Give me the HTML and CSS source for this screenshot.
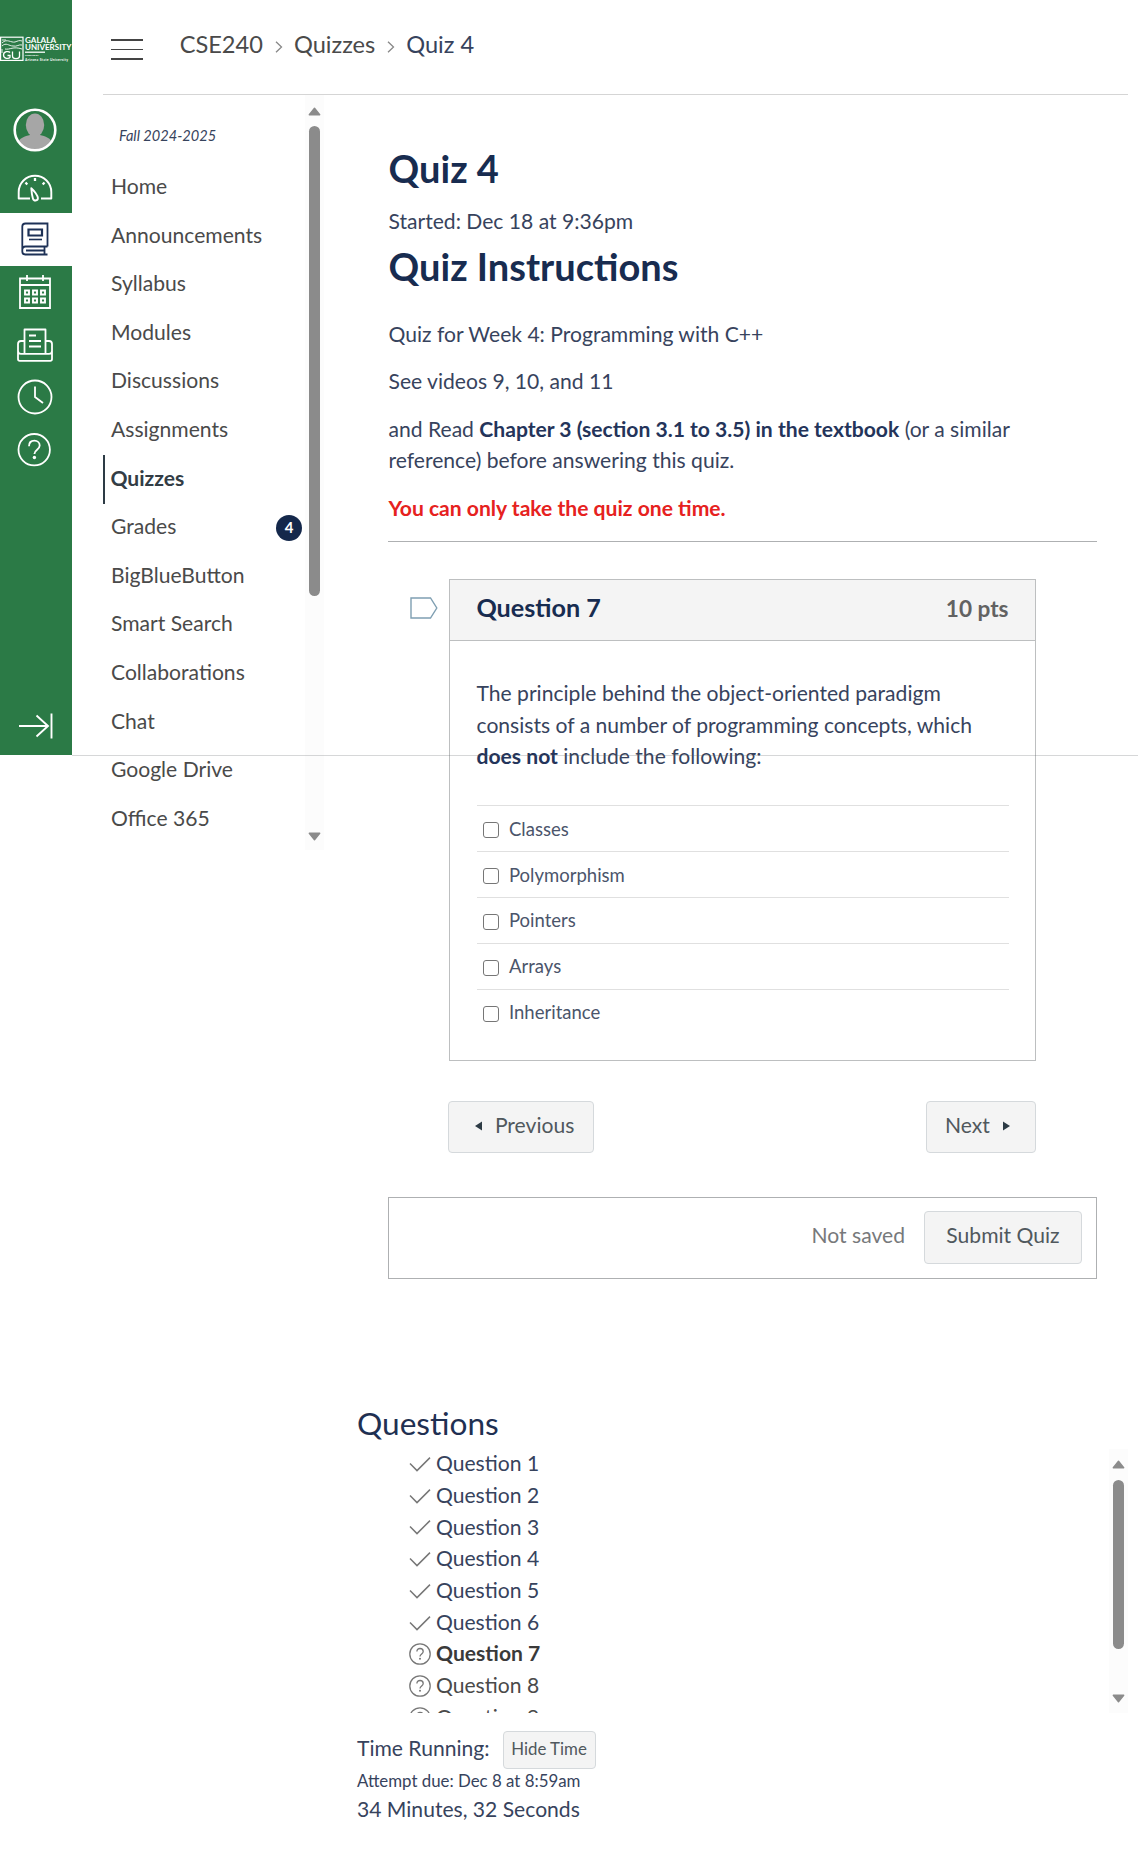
FILE: index.html
```html
<!DOCTYPE html>
<html lang="en">
<head>
<meta charset="utf-8">
<title>Quiz 4</title>
<link rel="stylesheet" href="styles.css">
</head>
<body>
<svg width="0" height="0" class="defs" aria-hidden="true">
  <symbol id="check" viewBox="0 0 22 22"><path d="M1 10.5 8 17.6 21 4.6" fill="none" stroke="#777" stroke-width="1.5"/></symbol>
  <symbol id="ask" viewBox="0 0 22 22"><g fill="none" stroke="#777" stroke-width="1.3"><circle cx="11" cy="11" r="10.2"/><path d="M7.9 8.6c0-1.9 1.3-3.1 3.1-3.1s3.2 1.2 3.2 2.9c0 2.5-3.2 2.5-3.2 5.2"/></g><circle cx="11" cy="15.7" r="1" fill="#777"/></symbol>
  <symbol id="up" viewBox="0 0 13 9"><path d="M6.5 1.2 11.7 7.8H1.3Z" fill="#8b8b8b" stroke="#8b8b8b" stroke-width="1.4" stroke-linejoin="round"/></symbol>
  <symbol id="down" viewBox="0 0 13 9"><path d="M6.5 7.8 1.3 1.2H11.7Z" fill="#8b8b8b" stroke="#8b8b8b" stroke-width="1.4" stroke-linejoin="round"/></symbol>
</svg>
<div class="layout">
  <nav class="global-nav">
    <svg class="logo" width="72" height="26" viewBox="0 0 72 26">
      <rect x=".6" y="1.2" width="22.4" height="23.2" fill="none" stroke="#fff" stroke-width="1.2"/>
      <path d="M2 7c5-5 9 0 13-1 3-1 4-2 7-1M2 10c4-4 7 0 11 0 4 1 6-2 9-1M5 13c5 1 8-3 17 0M2 4h4M2 13v4" fill="none" stroke="#e4f0e8" stroke-width="1"/>
      <path d="M10 16.5c-1-1.400-6.500-1.500-6.500 2.500s5.500 4 6.500 2.300V19.500H7.500M12.500 15.500v4.500c0 3.500 7 3.500 7 0v-4.500" fill="none" stroke="#fff" stroke-width="1.300"/>
      <g class="logo-text"><text x="25" y="7" font-size="7" textLength="31" lengthAdjust="spacingAndGlyphs">GALALA</text>
      <text x="25" y="13.500" font-size="7" textLength="46.500" lengthAdjust="spacingAndGlyphs">UNIVERSITY</text>
      <text x="25" y="20" font-size="2.600">Powered by</text>
      <text x="25" y="24.500" font-size="3.400" textLength="43">Arizona State University</text></g>
      <path d="M25 16.200h20" stroke="#fff" stroke-width="1.300"/>
    </svg>
    <svg class="avatar" width="44" height="44" viewBox="0 0 44 44"><defs><clipPath id="face"><circle cx="22" cy="22" r="20"/></clipPath></defs><circle cx="22" cy="22" r="20.300" fill="#2b7a46"/><g fill="#a6a6a6" clip-path="url(#face)"><ellipse cx="22" cy="17" rx="9.200" ry="11.500"/><path d="M4 36c2-6 8-8 13-9h10c5 1 11 3 13 9v8H4z"/></g><circle cx="22" cy="22" r="20.300" fill="none" stroke="#fff" stroke-width="2.600"/></svg>
    <ul class="global-list">
      <li><svg width="36" height="36" viewBox="0 0 36 36"><g fill="none" stroke="#fff" stroke-width="1.900" stroke-linejoin="round"><path d="M13 29.500H1.700V23a16.300 16.300 0 0 1 32.600 0v6.500H24"/><path d="M14.300 19.200c2.500 2.200 6.600 7.500 6.600 9.900 0 3-4.200 3.300-5 .3-.8-2.700-1.400-7-1.600-10.200Z"/><path d="M18 9v3M8.500 13.500l1.800 2M27.500 13.500l-1.800 2" stroke-width="2.300"/></g></svg></li>
      <li class="current"><svg width="36" height="36" viewBox="0 0 36 36"><g fill="none" stroke="#1d3156" stroke-width="1.800"><path d="M30.500 25.500V2.500H8.500c-2 0-3.200 1.200-3.200 3v25c0 2 1.200 3 3 3H30.500M5.300 29c0-2.300 1.200-3.500 3.200-3.500h22M27.500 25.500v8M9 29.500h18.500"/><path d="M11.500 8.500H25v6H11.500z" stroke-width="2.200"/><path d="M12 18.500h13" stroke-width="1.600"/></g></svg></li>
      <li><svg width="36" height="36" viewBox="0 0 36 36"><g fill="none" stroke="#fff" stroke-width="1.800"><path d="M3 4.500h30V34H3zM3 11h30M10 1v6M26 1v6"/><g stroke-width="1.900"><path d="M8 16.500h4v4H8zM16 16.500h4v4h-4zM24 16.500h4v4h-4zM8 24.500h4v4H8zM16 24.500h4v4h-4zM24 24.500h4v4h-4z"/></g></g></svg></li>
      <li><svg width="36" height="36" viewBox="0 0 36 36"><g fill="none" stroke="#fff" stroke-width="1.800" stroke-linejoin="round"><path d="M7.500 26V2.500h21V26M12 8.500h7M12 14h12M12 19.500h12"/><path d="M7.500 14H4c-2 0-3 1-3 3v15c0 1 .7 1.800 1.800 1.800h30.400c1 0 1.800-.8 1.800-1.800V17c0-2-1-3-3-3h-3.500M1 24c0 1.500 1 2.800 3 2.800h28c2 0 3-1.300 3-2.800"/></g></svg></li>
      <li><svg width="36" height="36" viewBox="0 0 36 36"><g fill="none" stroke="#fff" stroke-width="1.800"><circle cx="18" cy="18" r="16.500"/><path d="M18 7.500V18l8 6"/></g></svg></li>
      <li><svg width="36" height="36" viewBox="0 0 36 36"><g fill="none" stroke="#fff" stroke-width="1.800"><circle cx="17.200" cy="17.700" r="15.700"/><path d="M12 14.200c0-3.500 2.200-5.500 5.400-5.500 3.100 0 5.300 2 5.300 4.800 0 4.200-5.300 4.200-5.300 8.500"/></g><circle cx="17.400" cy="25.500" r="1.700" fill="#fff"/></svg></li>
    </ul>
    <svg class="expand" width="36" height="26" viewBox="0 0 36 26"><path d="M1 13h29M18.500 2.500 30 13 18.500 23.500M33.500.500v25" fill="none" stroke="#fff" stroke-width="1.900"/></svg>
  </nav>
  <div class="page">
    <header class="topbar">
      <span class="burger"><i></i><i></i><i></i></span>
      <nav class="crumbs">
        <a>CSE240</a><svg width="8" height="12" viewBox="0 0 8 12"><path d="M1 .700 6.500 6 1 11.300" fill="none" stroke="#888" stroke-width="1.300"/></svg><a>Quizzes</a><svg width="8" height="12" viewBox="0 0 8 12"><path d="M1 .700 6.500 6 1 11.300" fill="none" stroke="#888" stroke-width="1.300"/></svg><span>Quiz 4</span>
      </nav>
    </header>
    <div class="columns">
      <aside class="course-nav">
        <div class="course-links">
          <p class="term">Fall 2024-2025</p>
          <ul>
            <li>Home</li><li>Announcements</li><li>Syllabus</li><li>Modules</li><li>Discussions</li><li>Assignments</li>
            <li class="active">Quizzes</li><li>Grades<b class="badge">4</b></li><li>BigBlueButton</li><li>Smart Search</li><li>Collaborations</li><li>Chat</li><li>Google Drive</li><li>Office 365</li>
          </ul>
        </div>
        <div class="scrollbar"><svg width="13" height="9"><use href="#up"/></svg><span class="thumb nav-thumb"></span><svg class="end" width="13" height="9"><use href="#down"/></svg></div>
      </aside>
      <main>
        <section class="quiz">
          <h1>Quiz 4</h1>
          <p class="started">Started: Dec 18 at 9:36pm</p>
          <h1 class="instructions-title">Quiz Instructions</h1>
          <div class="instructions">
            <p>Quiz for Week 4: Programming with C++</p>
            <p>See videos 9, 10, and 11</p>
            <p>and Read <strong>Chapter 3 (section 3.1 to 3.5) in the textbook</strong> (or a similar reference) before answering this quiz.</p>
            <p class="warning">You can only take the quiz one time.</p>
          </div>
          <div class="question-row">
            <svg class="flag" width="28" height="22" viewBox="0 0 28 22"><path d="M1 1h19.500l6.300 10-6.300 10H1z" fill="#fff" stroke="#7f9fb2" stroke-width="1.400"/></svg>
            <article class="question">
              <header><h2>Question 7</h2><span>10 pts</span></header>
              <div class="question-body">
                <p>The principle behind the object-oriented paradigm consists of a number of programming concepts, which <strong>does not</strong> include the following:</p>
                <ul class="answers">
                  <li><i></i>Classes</li><li><i></i>Polymorphism</li><li><i></i>Pointers</li><li><i></i>Arrays</li><li><i></i>Inheritance</li>
                </ul>
              </div>
            </article>
          </div>
          <div class="pager">
            <button class="btn prev"><svg width="7" height="10"><path d="M7 .500v9L0 5z" fill="#2d3b45"/></svg>Previous</button>
            <button class="btn next">Next<svg width="7" height="10"><path d="M0 .500v9L7 5z" fill="#2d3b45"/></svg></button>
          </div>
          <div class="submit-bar"><span>Not saved</span><button class="btn submit">Submit Quiz</button></div>
        </section>
        <section class="progress">
          <h2>Questions</h2>
          <div class="list-frame">
            <ul class="question-list">
              <li><svg><use href="#check"/></svg>Question 1</li>
              <li><svg><use href="#check"/></svg>Question 2</li>
              <li><svg><use href="#check"/></svg>Question 3</li>
              <li><svg><use href="#check"/></svg>Question 4</li>
              <li><svg><use href="#check"/></svg>Question 5</li>
              <li><svg><use href="#check"/></svg>Question 6</li>
              <li class="now"><svg><use href="#ask"/></svg>Question 7</li>
              <li class="todo"><svg><use href="#ask"/></svg>Question 8</li>
              <li class="todo"><svg><use href="#ask"/></svg>Question 9</li>
            </ul>
            <div class="scrollbar"><svg width="13" height="9"><use href="#up"/></svg><span class="thumb list-thumb"></span><svg class="end" width="13" height="9"><use href="#down"/></svg></div>
          </div>
          <div class="timer"><span>Time Running:</span><button class="btn small">Hide Time</button></div>
          <p class="due">Attempt due: Dec 8 at 8:59am</p>
          <p>34 Minutes, 32 Seconds</p>
        </section>
      </main>
    </div>
  </div>
</div>
<div class="fold-line"></div>
</body>
</html>
```
FILE: styles.css
```css
* { box-sizing: border-box; margin: 0; padding: 0; }
body { position: relative; min-height: 1857px; background: #fff; color: #37435d; font: 21.1px/31.6px Lato, sans-serif; }
ul { list-style: none; }
svg { display: block; flex: none; }
.defs { position: absolute; }
.layout { display: flex; align-items: flex-start; }

.global-nav { display: flex; flex-direction: column; width: 72px; height: 755px; padding-top: 36px; background: #2b7a46; }
.logo-text { fill: #fff; font-family: Lato, sans-serif; font-weight: 700; }
.avatar { margin: 46px 0 8.300px 13.300px; }
.global-list li { display: flex; align-items: center; height: 52.700px; padding-left: 17.300px; }
.global-list .current { background: #fff; }
.expand { margin: auto 0 16px 18px; }

.page { flex: 1; margin-left: 31px; }
.topbar { display: flex; align-items: flex-start; height: 95px; margin-right: 10px; border-bottom: 1px solid #d5d5d5; padding-left: 8px; }
.burger { display: grid; gap: 8px; width: 32px; margin-top: 39px; }
.burger i { height: 1.600px; background: #444; }
.crumbs { display: flex; align-items: center; height: 32px; margin: 28.600px 0 0 36.700px; font-size: 23.600px; color: #4a4a4a; }
.crumbs svg { margin: 5px 11px 0 12px; }
.crumbs span { color: #37435d; }

.columns { display: flex; align-items: flex-start; }
.course-nav { display: flex; width: 221px; height: 755px; }
.course-links { width: 202px; padding-top: 26px; }
.term { height: 42.500px; padding-left: 16px; font-size: 14.600px; line-height: 30px; font-style: italic; color: #37435d; }
.course-links li { display: flex; align-items: center; height: 48.600px; padding: 0 3px 4px 8px; color: #4a4a4a; }
.course-links .active { padding-left: 5.400px; border-left: 2.600px solid #2d3b45; font-weight: 700; color: #333d45; }
.badge { display: grid; place-items: center; width: 26px; height: 26px; margin: 4px 0 0 auto; border-radius: 50%; background: #14284b; color: #fff; font-size: 15px; line-height: 22px; padding-bottom: 2px; }

.scrollbar { display: flex; flex-direction: column; align-items: center; width: 19px; padding: 11.500px 0 9.500px; background: #fcfcfc; }
.thumb { width: 11.500px; margin-top: 10.500px; border-radius: 6px; background: #8b8b8b; }
.nav-thumb { height: 470px; }
.list-thumb { height: 169px; }
.scrollbar .end { margin-top: auto; }

main { flex: 1; }
.quiz { width: 709px; margin-left: 64px; padding-top: 50px; }
h1 { padding-left: .6px; font-size: 38px; line-height: 46px; font-weight: 700; color: #182c50; }
.started { margin-top: 14px; }
.instructions-title { margin-top: 6px; }
.instructions { display: grid; gap: 15.800px; margin-top: 29.400px; padding: 0 60px 18.100px 0; border-bottom: 1px solid #aeb0b2; }
.started, .instructions p { padding-left: .5px; }
strong { color: #24345a; }
.instructions .warning { font-weight: 700; color: #e62120; }

.question-row { display: flex; margin-top: 36.500px; }
.flag { margin: 18.500px 0 0 21.500px; }
.question { width: 587px; height: 482px; margin-left: 11.500px; border: 1px solid #bdbfc0; }
.question header { display: flex; justify-content: space-between; height: 61px; padding: 12px 26.500px 0 26.400px; border-bottom: 1px solid #bdbfc0; background: #f4f4f4; }
.question h2 { font-size: 25.200px; font-weight: 700; color: #182c50; }
.question header span { font-size: 22.600px; font-weight: 700; color: #626262; line-height: 33.500px; }
.question-body { padding: 36.200px 26px 0 26.500px; }
.answers { margin-top: 33.300px; font-size: 18.500px; color: #4b556b; }
.answers li { display: flex; align-items: center; height: 45.930px; border-top: 1px solid #e0e0e0; padding: 1.500px 0 0 6.500px; }
.answers i { width: 16px; height: 16px; margin: 2px 10px 0 0; border: 1.400px solid #767676; border-radius: 3px; }

.btn { height: 52px; border: 1px solid #d5d9dc; border-radius: 4px; background: #f4f4f4; color: #50585d; font: inherit; display: flex; align-items: center; padding-bottom: 5px; }
.pager { display: flex; justify-content: space-between; margin: 40px 61px 0 60.400px; }
.prev { width: 145.500px; padding-left: 26px; gap: 12.500px; }
.next { width: 110.500px; padding-left: 18.500px; gap: 13px; }
.pager svg { margin-top: 4px; }
.submit-bar { display: flex; justify-content: flex-end; align-items: center; gap: 19px; height: 82px; margin-top: 44px; padding-right: 14px; border: 1px solid #aeb0b2; color: #77797b; }
.submit-bar span { padding-bottom: 6px; }
.submit { width: 158px; height: 53px; justify-content: center; padding-bottom: 6px; }

.progress { margin: 125px 10px 0 33px; }
.progress h2 { font-size: 31.600px; line-height: 38px; font-weight: 400; color: #1f3052; }
.list-frame { display: flex; justify-content: space-between; height: 266px; margin-top: 5px; overflow: hidden; }
.list-frame .scrollbar { margin-top: 2px; }
.question-list { padding: .3px 0 0 52px; }
.question-list li { display: flex; align-items: center; gap: 5px; height: 31.700px; }
.question-list svg { width: 22px; height: 22px; margin-top: 2px; }
.question-list .now { font-weight: 700; color: #3a3a3a; }
.question-list .todo { color: #4a4a4a; }
.timer { display: flex; gap: 13px; margin-top: 18px; }
.timer span { padding-top: 1px; }
.small { width: 93px; height: 38px; justify-content: center; font-size: 16.850px; padding-bottom: 3px; }
.due { font-size: 16.850px; line-height: 24px; }

/* Bottom edge of the first viewport, drawn over the scrolling content */
.fold-line { position: absolute; left: 72px; right: 0; top: 755px; height: 1px; background: rgba(90, 95, 100, .25); }
```
